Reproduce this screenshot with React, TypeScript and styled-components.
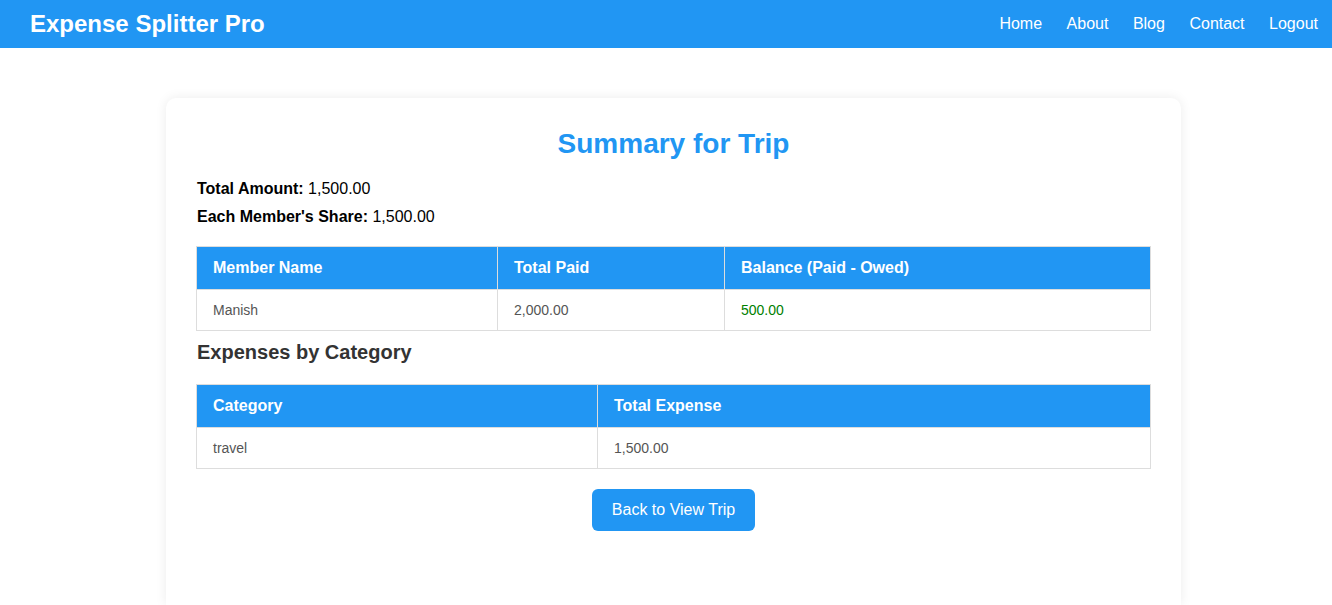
import React from "react";
import styled, { createGlobalStyle } from "styled-components";

const GlobalStyle = createGlobalStyle`
  body {
    margin: 0;
    background: #fff;
    font-family: "Liberation Sans", Arial, sans-serif;
  }
`;

const Navbar = styled.nav`
  height: 48px;
  background-color: #2196f3;
  color: #fff;
  display: flex;
  align-items: center;
  justify-content: space-between;
  padding: 0 14px 0 30px;
  .brand {
    font-size: 24px;
    font-weight: bold;
  }
  .links {
    display: flex;
    gap: 24.5px;
    a {
      color: #fff;
      text-decoration: none;
      font-size: 16px;
    }
  }
`;

const Card = styled.div`
  width: 1015px;
  box-sizing: border-box;
  margin: 50px 0 0 calc(50% - 500px);
  min-height: 507px;
  background: #fff;
  border-radius: 10px 10px 0 0;
  box-shadow: 0 0 12px rgba(0, 0, 0, 0.08);
  padding: 30px;
  display: flex;
  flex-direction: column;
  h2 {
    margin: 0 0 20px;
    text-align: center;
    color: #2196f3;
    font-size: 28px;
    line-height: 32px;
  }
  h3 {
    margin: 10px 0 20px 1px;
    font-size: 20px;
    color: #333;
  }
`;

const Stat = styled.p`
  margin: 0 0 10px 1px;
  font-size: 16px;
  color: #000;
  strong {
    font-weight: bold;
  }
`;

const Table = styled.table<{ $flush?: boolean }>`
  width: 100%;
  border-collapse: collapse;
  table-layout: fixed;
  margin-top: ${(p) => (p.$flush ? "0" : "10px")};
  border: 1px solid #ddd;
  th,
  td {
    border: 1px solid #ddd;
    padding: 12px 16px;
    text-align: left;
  }
  th {
    background-color: #2196f3;
    color: #fff;
    font-size: 16px;
    font-weight: bold;
  }
  td {
    font-size: 14px;
    color: #555;
  }
  td.positive {
    color: green;
  }
`;

const Col = styled.col<{ $width?: number }>`
  width: ${(p) => (p.$width ? `${p.$width}px` : "auto")};
`;

const BackButton = styled.button`
  align-self: center;
  margin-top: 20px;
  background-color: #2196f3;
  color: #fff;
  border: none;
  border-radius: 6px;
  padding: 12px 20px;
  font-family: "Liberation Sans", Arial, sans-serif;
  font-size: 16px;
  line-height: 18px;
  cursor: pointer;
`;

export default function App() {
  return (
    <>
      <GlobalStyle />
      <Navbar>
        <div className="brand">Expense Splitter Pro</div>
        <div className="links">
          <a href="#">Home</a>
          <a href="#">About</a>
          <a href="#">Blog</a>
          <a href="#">Contact</a>
          <a href="#">Logout</a>
        </div>
      </Navbar>
      <Card>
        <h2>Summary for Trip</h2>
        <Stat>
          <strong>Total Amount:</strong> 1,500.00
        </Stat>
        <Stat>
          <strong>Each Member's Share:</strong> 1,500.00
        </Stat>
        <Table>
          <colgroup>
            <Col $width={301} />
            <Col $width={227} />
            <Col />
          </colgroup>
          <thead>
            <tr>
              <th>Member Name</th>
              <th>Total Paid</th>
              <th>Balance (Paid - Owed)</th>
            </tr>
          </thead>
          <tbody>
            <tr>
              <td>Manish</td>
              <td>2,000.00</td>
              <td className="positive">500.00</td>
            </tr>
          </tbody>
        </Table>
        <h3>Expenses by Category</h3>
        <Table $flush>
          <colgroup>
            <Col $width={401} />
            <Col />
          </colgroup>
          <thead>
            <tr>
              <th>Category</th>
              <th>Total Expense</th>
            </tr>
          </thead>
          <tbody>
            <tr>
              <td>travel</td>
              <td>1,500.00</td>
            </tr>
          </tbody>
        </Table>
        <BackButton>Back to View Trip</BackButton>
      </Card>
    </>
  );
}
